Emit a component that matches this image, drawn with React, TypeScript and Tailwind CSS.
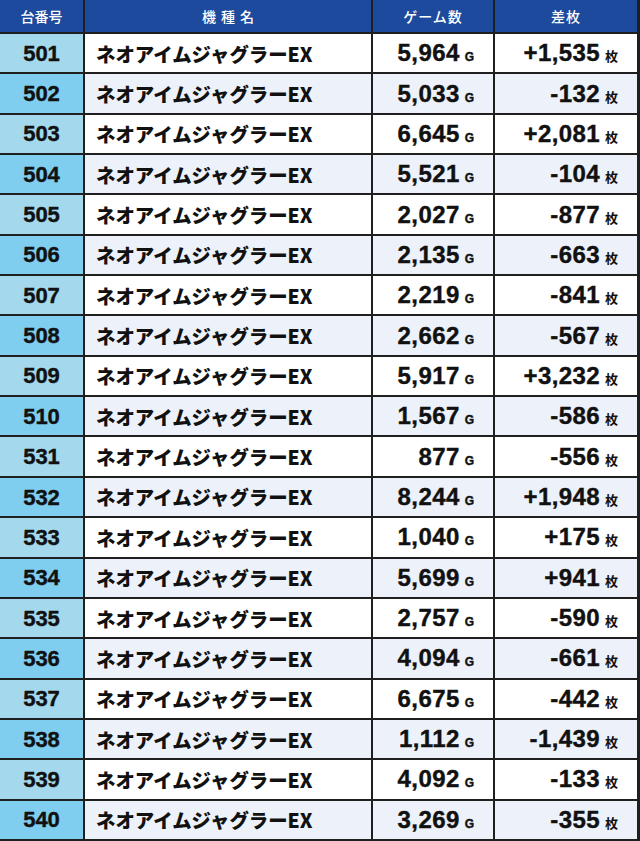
import React from "react";

const rows: [string, string, string][] = [
  ["501", "5,964", "+1,535"],
  ["502", "5,033", "-132"],
  ["503", "6,645", "+2,081"],
  ["504", "5,521", "-104"],
  ["505", "2,027", "-877"],
  ["506", "2,135", "-663"],
  ["507", "2,219", "-841"],
  ["508", "2,662", "-567"],
  ["509", "5,917", "+3,232"],
  ["510", "1,567", "-586"],
  ["531", "877", "-556"],
  ["532", "8,244", "+1,948"],
  ["533", "1,040", "+175"],
  ["534", "5,699", "+941"],
  ["535", "2,757", "-590"],
  ["536", "4,094", "-661"],
  ["537", "6,675", "-442"],
  ["538", "1,112", "-1,439"],
  ["539", "4,092", "-133"],
  ["540", "3,269", "-355"],
];

const num = "font-['Liberation_Sans',Arial,sans-serif] font-bold [-webkit-text-stroke:0.4px_#111]";
const jp = "font-['Noto_Sans_CJK_JP',sans-serif]";

export default function App() {
  return (
    <div className="w-[640px] h-[841px] bg-[#1f1f1f] pr-[3px] pb-[2px] grid grid-cols-[83px_286px_120px_142px] grid-rows-[32px_repeat(20,1fr)] gap-x-[2px] gap-y-[2px]">
      <div className={`bg-[#1d4a9c] text-white text-[14px] ${jp} font-medium flex items-center justify-center`}>台番号</div>
      <div className={`bg-[#1d4a9c] text-white text-[14px] ${jp} font-medium flex items-center justify-center tracking-[5px] pl-[5px]`}>機種名</div>
      <div className={`bg-[#1d4a9c] text-white text-[14px] ${jp} font-medium flex items-center justify-center tracking-[1px]`}>ゲーム数</div>
      <div className={`bg-[#1d4a9c] text-white text-[14px] ${jp} font-medium flex items-center justify-center tracking-[1px]`}>差枚</div>
      {rows.map(([id, games, diff], i) => {
        const even = i % 2 === 1;
        const idBg = even ? "bg-[#7fcdef]" : "bg-[#a4d9ed]";
        const bodyBg = even ? "bg-[#edf1fa]" : "bg-white";
        return (
          <React.Fragment key={id}>
            <div className={`${idBg} ${num} text-[22px] text-[#111] flex items-center justify-center`}>{id}</div>
            <div className={`${bodyBg} ${jp} font-black text-[19.4px] text-[#111] flex items-center pl-[11px]`}>
              ネオアイムジャグラーEX
            </div>
            <div className={`${bodyBg} text-[#111] flex items-center justify-end pr-[19px]`}>
              <span className="flex items-baseline">
                <span className={`${num} text-[24px] tracking-[0.4px]`}>{games}</span>
                <span className={`${num} text-[12px] ml-[5px]`}>G</span>
              </span>
            </div>
            <div className={`${bodyBg} text-[#111] flex items-center justify-end pr-[19px]`}>
              <span className="flex items-baseline">
                <span className={`${num} text-[24px] tracking-[0.4px]`}>{diff}</span>
                <span className={`${jp} font-bold text-[13px] ml-[5px]`}>枚</span>
              </span>
            </div>
          </React.Fragment>
        );
      })}
    </div>
  );
}
